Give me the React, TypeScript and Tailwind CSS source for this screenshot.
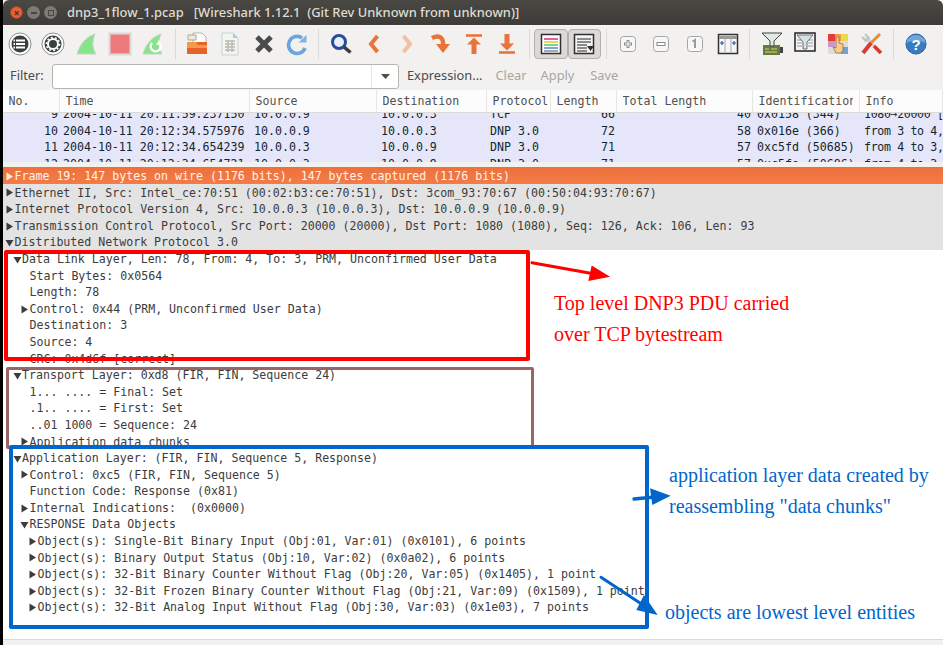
const mono = "font-['DejaVu_Sans_Mono',monospace] text-[11.6px] leading-[16.6px] whitespace-pre";
const ui = "font-['Noto_Sans','Open_Sans',sans-serif]";

function Sep() {
  return (
    <div className="w-[10.5px] h-[30px] flex justify-center shrink-0">
      <div className="w-px h-full bg-[#dcdad7]" />
    </div>
  );
}

function Tool({ children, pressed = false }: { children: React.ReactNode; pressed?: boolean }) {
  return (
    <div
      className={`w-[33.3px] h-[30px] shrink-0 flex items-center justify-center rounded-[4px] ${
        pressed ? "bg-[#dcdad7] border border-[#b3b0ab]" : ""
      }`}
    >
      {children}
    </div>
  );
}

function Ico({ children }: { children: React.ReactNode }) {
  return (
    <svg width="24" height="24" viewBox="0 0 24 24">
      {children}
    </svg>
  );
}

const Fin = () => (
  <path d="M2 22 C5 12 11 5 20 2 C17 9 17 16 21 22 Z" fill="#86e58a" stroke="#c9d3c5" strokeWidth="1" />
);

const Arrows = {
  list: (
    <Ico>
      <circle cx="12" cy="12" r="11" fill="#fff" stroke="#8d8d8d" />
      <circle cx="12" cy="12" r="8.5" fill="#3a3f42" />
      <path d="M8 8.5h9M8 12h9M8 15.5h9" stroke="#fff" strokeWidth="2" />
      <path d="M5.5 8.5h1.5M5.5 12h1.5M5.5 15.5h1.5" stroke="#fff" strokeWidth="2" />
    </Ico>
  ),
  gear: (
    <Ico>
      <circle cx="12" cy="12" r="11" fill="#fff" stroke="#8d8d8d" />
      <circle cx="12" cy="12" r="8.5" fill="#3a3f42" />
      <circle cx="12" cy="12" r="5" fill="none" stroke="#fff" strokeWidth="2" />
      <circle cx="12" cy="12" r="6.6" fill="none" stroke="#fff" strokeWidth="1.5" strokeDasharray="2 2.1" />
    </Ico>
  ),
  fin: (
    <Ico>
      <Fin />
    </Ico>
  ),
  stop: (
    <Ico>
      <rect x="1.5" y="1.5" width="21" height="21" fill="#ee7a7c" stroke="#dcdad7" strokeWidth="2" />
    </Ico>
  ),
  finReload: (
    <Ico>
      <Fin />
      <path d="M17 10 a5 5 0 1 1 -6 1" fill="none" stroke="#fff" strokeWidth="2.4" />
      <path d="M15 13 l5 -1 -2 -4z" fill="#fff" />
    </Ico>
  ),
  folder: (
    <Ico>
      <path d="M8 1h9l4 4v13H8z" fill="#fdfdfb" stroke="#b5b2aa" />
      <path d="M3 3h8v5H3z" fill="#eee9dc" stroke="#b5a88e" />
      <path d="M2 10h20v12H2z" fill="#e5622a" />
      <path d="M2 10h9l2 3h9v3H2z" fill="#f29a4c" />
    </Ico>
  ),
  file: (
    <Ico>
      <path d="M4 1h11l5 5v17H4z" fill="#f4f4f0" stroke="#c6d4dc" />
      <path d="M15 1v5h5z" fill="#a9cbe0" />
      <path d="M7 9h10M7 12h10M7 15h10M7 18h10M10 9v11M14 9v11" stroke="#b8b8b0" strokeWidth="1.4" />
    </Ico>
  ),
  close: (
    <Ico>
      <path d="M5 5l14 14M19 5L5 19" stroke="#4b4b4b" strokeWidth="5" />
    </Ico>
  ),
  reload: (
    <Ico>
      <path d="M20 16a8.5 8.5 0 1 1 -3 -10" fill="none" stroke="#6aa5de" strokeWidth="3.6" />
      <path d="M13.5 10.5h8V3z" fill="#7db3e3" />
    </Ico>
  ),
  search: (
    <Ico>
      <circle cx="10" cy="10" r="6.5" fill="#e6eefa" stroke="#2a4a9c" strokeWidth="3" />
      <path d="M15 15l6.5 5.5" stroke="#3c3c3c" strokeWidth="3.6" />
    </Ico>
  ),
  back: (
    <Ico>
      <path d="M15.5 4L9 12l6.5 8" fill="none" stroke="#e8743b" strokeWidth="4" />
    </Ico>
  ),
  forward: (
    <Ico>
      <path d="M8.5 4l6.5 8-6.5 8" fill="none" stroke="#f2bfa4" strokeWidth="4" />
    </Ico>
  ),
  jump: (
    <Ico>
      <path d="M3 6c8-4 12 0 11 9" fill="none" stroke="#e8743b" strokeWidth="4.5" />
      <path d="M7 12h14l-7 9z" fill="#e8743b" />
    </Ico>
  ),
  top: (
    <Ico>
      <path d="M4 3.5h16" stroke="#e8743b" strokeWidth="2.6" />
      <path d="M12 5.5l-7 7h4.5V22h5v-9.5H19z" fill="#e8743b" />
    </Ico>
  ),
  bottom: (
    <Ico>
      <path d="M4 20.5h16" stroke="#e8743b" strokeWidth="2.6" />
      <path d="M12 18.5l-7-7h4.5V2h5v9.5H19z" fill="#e8743b" />
    </Ico>
  ),
  colorize: (
    <Ico>
      <rect x="2.5" y="2.5" width="19" height="19" fill="#fff" stroke="#2f2f2f" strokeWidth="1.5" />
      <path d="M5 7h14" stroke="#e85fa8" strokeWidth="2" />
      <path d="M5 10h14" stroke="#ecd65a" strokeWidth="2" />
      <path d="M5 13h14" stroke="#6fd6a0" strokeWidth="2" />
      <path d="M5 16h14" stroke="#7aa7e0" strokeWidth="2" />
      <path d="M5 19h14" stroke="#8a8a8a" strokeWidth="1.5" />
    </Ico>
  ),
  autoScroll: (
    <Ico>
      <rect x="2.5" y="2.5" width="19" height="19" fill="#f4f4f4" stroke="#2f2f2f" strokeWidth="1.5" />
      <path d="M5 7h14M5 10h14M5 13h10M5 16h10M5 19h10" stroke="#6a6a6a" strokeWidth="1.4" />
      <path d="M15 14h7l-3.5 5z" fill="#2f2f2f" />
    </Ico>
  ),
  zoomIn: (
    <Ico>
      <rect x="4.5" y="4.5" width="15" height="15" rx="3" fill="#f7f7f7" stroke="#a5a5a5" />
      <path d="M12 8v8M8 12h8" stroke="#8a8a8a" strokeWidth="2.8" />
      <path d="M12 9v6M9 12h6" stroke="#fff" strokeWidth="1" />
    </Ico>
  ),
  zoomOut: (
    <Ico>
      <rect x="4.5" y="4.5" width="15" height="15" rx="3" fill="#f7f7f7" stroke="#a5a5a5" />
      <rect x="8" y="10.5" width="8" height="3" fill="#fff" stroke="#8a8a8a" />
    </Ico>
  ),
  zoomOne: (
    <Ico>
      <rect x="4.5" y="4.5" width="15" height="15" rx="3" fill="#f7f7f7" stroke="#a5a5a5" />
      <path d="M9.5 9.5l2.5-1.5v8" fill="none" stroke="#9a9a9a" strokeWidth="2" />
    </Ico>
  ),
  resize: (
    <Ico>
      <rect x="2.5" y="2.5" width="19" height="19" fill="#f6f6f6" stroke="#333" strokeWidth="1.5" />
      <path d="M3 5.5h18" stroke="#999" strokeWidth="3" />
      <path d="M9 3v18M15 3v18" stroke="#aaa" strokeWidth="1" />
      <path d="M4 11h4M6 9v4M16 11h4M18 9v4" stroke="#2a5a9c" strokeWidth="1.2" />
    </Ico>
  ),
  capFilter: (
    <Ico>
      <path d="M3 13h17v10H3z" fill="#5d7f45" />
      <path d="M20 15h3v6h-3z" fill="#444" />
      <path d="M5 17h4M11 17h6M5 20h12" stroke="#c9b04c" strokeWidth="1.3" />
      <path d="M2 1h20l-8 8v5h-4V9z" fill="#dfe9e6" stroke="#444" strokeWidth="1" />
    </Ico>
  ),
  dispFilter: (
    <Ico>
      <rect x="2" y="1" width="20" height="18" fill="#f4f4f4" stroke="#222" strokeWidth="1.5" />
      <path d="M15 8h5M15 11h5M15 14h5M4 8h5M4 11h5M4 14h5" stroke="#999" />
      <path d="M4 3h16l-6 7v7h-4v-7z" fill="#d5e2e6" stroke="#555" strokeWidth="0.8" />
    </Ico>
  ),
  coloring: (
    <Ico>
      <rect x="2" y="2" width="20" height="20" rx="2" fill="#dcdcdc" />
      <path d="M2 2h7v7H2z" fill="#e23b3b" />
      <path d="M9 2h6v7H9z" fill="#ef9a3c" />
      <path d="M15 2h7v7h-7z" fill="#ecd84c" />
      <path d="M2 9h7v6H2z" fill="#c49ac9" />
      <path d="M15 15h7v7h-7z" fill="#6fa3d8" />
      <path d="M10 6a1.5 1.5 0 0 1 3 0v5l4 1v6l-2 3h-5l-3-6 3 1z" fill="#f6cf90" stroke="#a56a2c" strokeWidth="0.8" />
    </Ico>
  ),
  prefs: (
    <Ico>
      <path d="M6 5l14 16" stroke="#d2d4d0" strokeWidth="3.4" />
      <path d="M2 5l4 4 3-3-4-4" fill="none" stroke="#c2c4c0" strokeWidth="2" />
      <path d="M20 2L8 14" stroke="#ea8a36" strokeWidth="3" />
      <path d="M11 11L3 21" stroke="#d83b30" strokeWidth="4" />
      <path d="M14 14l7 7" stroke="#d83b30" strokeWidth="3.6" />
    </Ico>
  ),
  help: (
    <svg width="24" height="24" viewBox="0 0 24 24">
      <circle cx="12" cy="12" r="10" fill="#3a7cc4" stroke="#2a5f9c" />
      <path d="M2.5 11a9.5 8 0 0 1 19 0c-6-3-13-3-19 0z" fill="#6ea6dc" />
      <text x="12" y="17.5" textAnchor="middle" fontSize="15" fontWeight="700" fill="#fff" fontFamily="Liberation Sans, sans-serif">
        ?
      </text>
    </svg>
  ),
};

const packetCols = "grid grid-cols-[57px_190px_127px_110px_64px_66px_136px_107px_83px]";

const packets = [
  ["9", "2004-10-11 20:11:59.237150", "10.0.0.9", "10.0.0.3", "TCP", "66", "40", "0x0158 (344)", "1080→20000 [ACK]"],
  ["10", "2004-10-11 20:12:34.575976", "10.0.0.9", "10.0.0.3", "DNP 3.0", "72", "58", "0x016e (366)", "from 3 to 4, len=10"],
  ["11", "2004-10-11 20:12:34.654239", "10.0.0.3", "10.0.0.9", "DNP 3.0", "71", "57", "0xc5fd (50685)", "from 4 to 3, len=10"],
  ["12", "2004-10-11 20:12:34.654721", "10.0.0.3", "10.0.0.9", "DNP 3.0", "71", "57", "0xc5fe (50686)", "from 4 to 3, len=10"],
];

const headers = ["No.", "Time", "Source", "Destination", "Protocol", "Length", "Total Length", "Identification", "Info"];

// depth, arrow (r/d/none), label
const details: [number, "r" | "d" | "", string][] = [
  [0, "r", "Ethernet II, Src: Intel_ce:70:51 (00:02:b3:ce:70:51), Dst: 3com_93:70:67 (00:50:04:93:70:67)"],
  [0, "r", "Internet Protocol Version 4, Src: 10.0.0.3 (10.0.0.3), Dst: 10.0.0.9 (10.0.0.9)"],
  [0, "r", "Transmission Control Protocol, Src Port: 20000 (20000), Dst Port: 1080 (1080), Seq: 126, Ack: 106, Len: 93"],
  [0, "d", "Distributed Network Protocol 3.0"],
  [1, "d", "Data Link Layer, Len: 78, From: 4, To: 3, PRM, Unconfirmed User Data"],
  [2, "", "Start Bytes: 0x0564"],
  [2, "", "Length: 78"],
  [2, "r", "Control: 0x44 (PRM, Unconfirmed User Data)"],
  [2, "", "Destination: 3"],
  [2, "", "Source: 4"],
  [2, "", "CRC: 0x4d6f [correct]"],
  [1, "d", "Transport Layer: 0xd8 (FIR, FIN, Sequence 24)"],
  [2, "", "1... .... = Final: Set"],
  [2, "", ".1.. .... = First: Set"],
  [2, "", "..01 1000 = Sequence: 24"],
  [2, "r", "Application data chunks"],
  [1, "d", "Application Layer: (FIR, FIN, Sequence 5, Response)"],
  [2, "r", "Control: 0xc5 (FIR, FIN, Sequence 5)"],
  [2, "", "Function Code: Response (0x81)"],
  [2, "r", "Internal Indications:  (0x0000)"],
  [2, "d", "RESPONSE Data Objects"],
  [3, "r", "Object(s): Single-Bit Binary Input (Obj:01, Var:01) (0x0101), 6 points"],
  [3, "r", "Object(s): Binary Output Status (Obj:10, Var:02) (0x0a02), 6 points"],
  [3, "r", "Object(s): 32-Bit Binary Counter Without Flag (Obj:20, Var:05) (0x1405), 1 point"],
  [3, "r", "Object(s): 32-Bit Frozen Binary Counter Without Flag (Obj:21, Var:09) (0x1509), 1 point"],
  [3, "r", "Object(s): 32-Bit Analog Input Without Flag (Obj:30, Var:03) (0x1e03), 7 points"],
];

function Tri({ dir, color = "#3c3c3c" }: { dir: "r" | "d" | ""; color?: string }) {
  return (
    <span className="w-[9px] h-[9px] shrink-0 mr-[0.5px]">
      {dir && (
        <svg width="9" height="9" viewBox="0 0 9 9" className="block">
          <path d={dir === "r" ? "M1.5 0.5L8 4.5 1.5 8.5z" : "M0.5 2L8.5 2 4.5 8.5z"} fill={color} />
        </svg>
      )}
    </span>
  );
}

function DetailRow({ depth, arrow, label }: { depth: number; arrow: "r" | "d" | ""; label: string }) {
  const pad = ["pl-[2px]", "pl-[9.5px]", "pl-[17px]", "pl-[25px]"][depth];
  return (
    <div className={`flex items-center h-[16.6px] pt-[2px] ${pad} ${depth === 0 ? "bg-[#e3e3e3]" : ""} ${mono} text-[#3c3c3c]`}>
      <Tri dir={arrow} />
      <span>{label}</span>
    </div>
  );
}

export default function App() {
  return (
    <div className="relative w-[943px] h-[645px] overflow-hidden bg-black flex">
      <div className="w-[3px] shrink-0" />
      <div className="flex-1 flex flex-col min-w-0 bg-[#f2f1f0]">
        {/* title bar */}
        <div className="h-[25px] shrink-0 flex items-center rounded-t-[6px] bg-gradient-to-b from-[#4a4843] to-[#3c3b37]">
          <div className="w-[7px]" />
          <div className="w-[13px] h-[13px] rounded-full bg-[#e2603a] border border-[#9c4326] flex items-center justify-center text-[10px] leading-none text-[#5a2412] font-bold">
            ×
          </div>
          <div className="w-[13px] h-[13px] rounded-full bg-[#7c7a73] ml-[4px] flex items-center justify-center">
            <div className="w-[6px] h-[2px] bg-[#4a4843]" />
          </div>
          <div className="w-[13px] h-[13px] rounded-full bg-[#7c7a73] ml-[4px] flex items-center justify-center">
            <div className="w-[6px] h-[6px] border border-[#4a4843]" />
          </div>
          <span className={`${ui} ml-[10px] text-[12.9px] font-medium text-[#dfdbd2] whitespace-pre`}>
            dnp3_1flow_1.pcap{"   "}[Wireshark 1.12.1{"  "}(Git Rev Unknown from unknown)]
          </span>
        </div>

        {/* main toolbar */}
        <div className="h-[37px] shrink-0 flex items-center pl-[0.5px] border-t border-[#f7f6f5]">
          <Tool>{Arrows.list}</Tool>
          <Tool>{Arrows.gear}</Tool>
          <Tool>{Arrows.fin}</Tool>
          <Tool>{Arrows.stop}</Tool>
          <Tool>{Arrows.finReload}</Tool>
          <Sep />
          <Tool>{Arrows.folder}</Tool>
          <Tool>{Arrows.file}</Tool>
          <Tool>{Arrows.close}</Tool>
          <Tool>{Arrows.reload}</Tool>
          <Sep />
          <Tool>{Arrows.search}</Tool>
          <Tool>{Arrows.back}</Tool>
          <Tool>{Arrows.forward}</Tool>
          <Tool>{Arrows.jump}</Tool>
          <Tool>{Arrows.top}</Tool>
          <Tool>{Arrows.bottom}</Tool>
          <Sep />
          <Tool pressed>{Arrows.colorize}</Tool>
          <Tool pressed>{Arrows.autoScroll}</Tool>
          <Sep />
          <Tool>{Arrows.zoomIn}</Tool>
          <Tool>{Arrows.zoomOut}</Tool>
          <Tool>{Arrows.zoomOne}</Tool>
          <Tool>{Arrows.resize}</Tool>
          <Sep />
          <Tool>{Arrows.capFilter}</Tool>
          <Tool>{Arrows.dispFilter}</Tool>
          <Tool>{Arrows.coloring}</Tool>
          <Tool>{Arrows.prefs}</Tool>
          <Sep />
          <Tool>{Arrows.help}</Tool>
        </div>

        {/* filter row */}
        <div className={`${ui} h-[28px] shrink-0 flex items-center pl-[7px] text-[12.8px]`}>
          <span className="text-[#4c4c4c] w-[42px]">Filter:</span>
          <div className="w-[347px] h-[25px] rounded-[3px] border border-[#b8b4ae] bg-white flex justify-end">
            <div className="w-[27px] border-l border-[#e6e4e1] flex items-center justify-center">
              <svg width="9" height="5" viewBox="0 0 9 5">
                <path d="M0 0h9L4.5 5z" fill="#4c4c4c" />
              </svg>
            </div>
          </div>
          <span className="ml-[8px] text-[#4c4c4c]">Expression...</span>
          <span className="ml-[13px] text-[#a8a6a2]">Clear</span>
          <span className="ml-[14px] text-[#a8a6a2]">Apply</span>
          <span className="ml-[16px] text-[#a8a6a2]">Save</span>
        </div>

        {/* packet list header */}
        <div className={`${packetCols} h-[23px] shrink-0 bg-[#fcfcfc] border-b border-[#dddbd8]`}>
          {headers.map((h) => (
            <div
              key={h}
              className={`${mono} pl-[5.5px] ${h === "Identification" ? "pr-[6.5px]" : "pr-[1px]"} flex items-center border-r border-[#e8e6e3] text-[#505050] min-w-0`}
            >
              <span className="overflow-hidden">{h}</span>
            </div>
          ))}
        </div>

        {/* packet list, first and last rows are cut by the pane */}
        <div className="h-[49px] shrink-0 overflow-hidden bg-[#e6e6fa]">
          <div className="-mt-[7px]">
            {packets.map((p) => (
              <div key={p[0]} className={`${packetCols} ${mono} text-[#12272e] h-[16.5px]`}>
                <span className="text-right pr-[2px] overflow-hidden">{p[0]}</span>
                <span className="pl-[3px] overflow-hidden">{p[1]}</span>
                <span className="pl-[4px] overflow-hidden">{p[2]}</span>
                <span className="pl-[4px] overflow-hidden">{p[3]}</span>
                <span className="pl-[3px] overflow-hidden">{p[4]}</span>
                <span className="text-right pr-[2px] overflow-hidden">{p[5]}</span>
                <span className="text-right pr-[2px] overflow-hidden">{p[6]}</span>
                <span className="pl-[4px] overflow-hidden">{p[7]}</span>
                <span className="pl-[4px] overflow-hidden tracking-[-0.35px]">{p[8]}</span>
              </div>
            ))}
          </div>
        </div>

        {/* pane handle */}
        <div className="h-[5px] shrink-0 bg-[#f2f1f0]" />

        {/* packet details */}
        <div className="h-[473px] shrink-0 bg-white border-b border-[#dcdad7] overflow-hidden">
          <div className={`flex items-center h-[16.6px] pt-[2px] pl-[2px] bg-gradient-to-b from-[#ec703c] to-[#f47c47] ${mono} text-[#fff3ea]`}>
            <Tri dir="r" color="#ffe9dc" />
            <span>Frame 19: 147 bytes on wire (1176 bits), 147 bytes captured (1176 bits)</span>
          </div>
          {details.map(([depth, arrow, label]) => (
            <DetailRow key={label} depth={depth} arrow={arrow} label={label} />
          ))}
        </div>
      </div>

      {/* annotations drawn over the capture */}
      <div className="absolute left-[4px] top-[250px] w-[526px] h-[111px] border-[4px] border-[#ff0000] rounded-[2px]" />
      <div className="absolute left-[6px] top-[367px] w-[528px] h-[82px] border-[3.5px] border-[#996666] rounded-[2px]" />
      <div className="absolute left-[9px] top-[445px] w-[640px] h-[184px] border-[4px] border-[#0066cc] rounded-[2px]" />

      <svg className="absolute left-0 top-0 pointer-events-none" width="943" height="645" viewBox="0 0 943 645">
        <path d="M532 262.7L592 273.5" stroke="#ff0000" strokeWidth="3" strokeLinecap="round" />
        <path d="M610 276.7L591.7 265.5 588.3 281z" fill="#ff0000" />
        <path d="M634 499L652 497.3" stroke="#0066cc" strokeWidth="3.4" strokeLinecap="round" />
        <path d="M670.7 495.7L650 488.3 652.3 505z" fill="#0066cc" />
        <path d="M601 577.3L643 605" stroke="#0066cc" strokeWidth="3" strokeLinecap="round" />
        <path d="M657.7 615L644 595 636.3 610z" fill="#0066cc" />
      </svg>

      <div className="absolute left-[554px] top-[288px] font-['Liberation_Serif',serif] text-[20px] leading-[31px] text-[#ff0000] whitespace-pre">
        Top level DNP3 PDU carried{"\n"}over TCP bytestream
      </div>
      <div className="absolute left-[669px] top-[460px] font-['Liberation_Serif',serif] text-[20px] leading-[31px] text-[#0066cc] whitespace-pre">
        application layer data created by{"\n"}reassembling "data chunks"
      </div>
      <div className="absolute left-[665px] top-[597px] font-['Liberation_Serif',serif] text-[20px] leading-[31px] text-[#0066cc] whitespace-pre">
        objects are lowest level entities
      </div>
    </div>
  );
}
